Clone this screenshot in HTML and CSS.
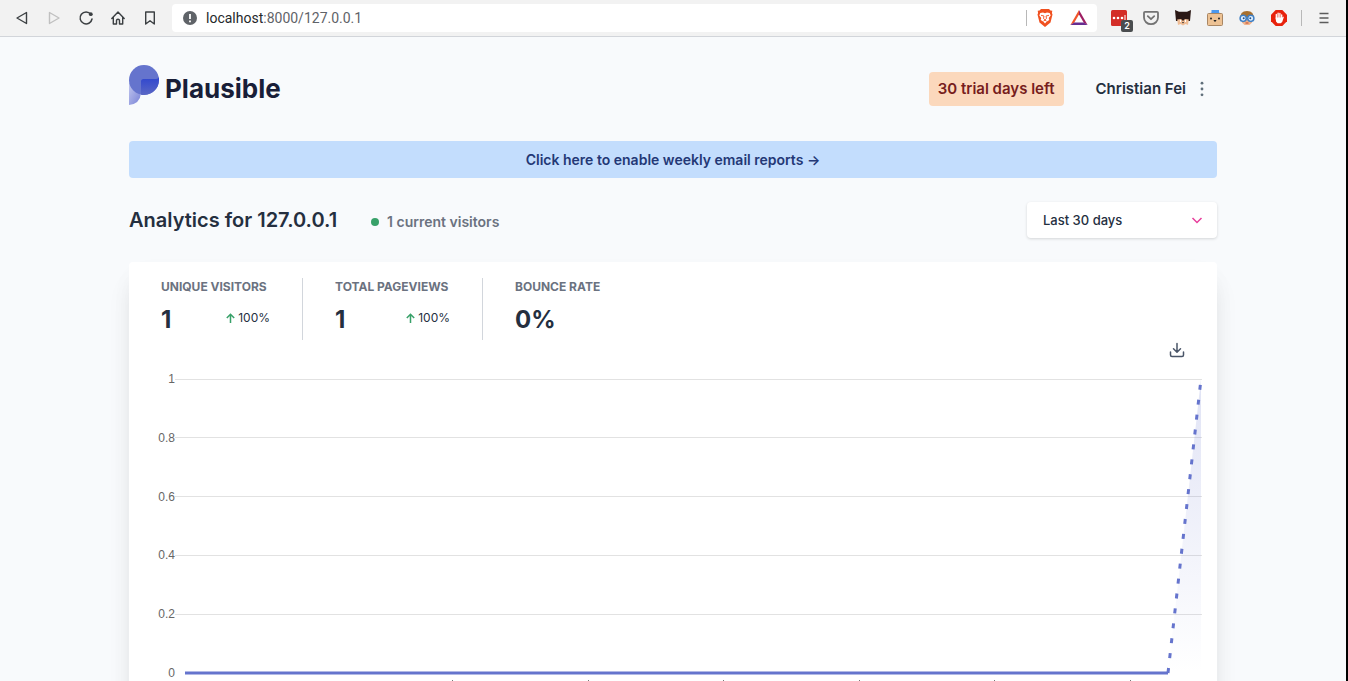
FILE: index.html
```html
<!DOCTYPE html>
<html lang="en">
<head>
<meta charset="utf-8">
<title>Plausible · 127.0.0.1</title>
<link rel="stylesheet" href="styles.css">
</head>
<body>
<div class="window">
  <header class="toolbar">
    <div class="nav-buttons">
      <button class="tool" aria-label="Back"><svg width="16" height="16" viewBox="0 0 16 16"><path d="M12.5 2.5v11L3 8z" fill="none" stroke="#3c4043" stroke-width="1.4" stroke-linejoin="round"/></svg></button>
      <button class="tool" aria-label="Forward" disabled><svg width="16" height="16" viewBox="0 0 16 16"><path d="M3.5 2.5v11L13 8z" fill="none" stroke="#c0c0c0" stroke-width="1.4" stroke-linejoin="round"/></svg></button>
      <button class="tool" aria-label="Reload"><svg width="16" height="16" viewBox="0 0 16 16"><path d="M12.8 4.2A6 6 0 1 0 14 9" fill="none" stroke="#3c4043" stroke-width="1.5" stroke-linecap="round"/><circle cx="12.8" cy="4.2" r="1.9" fill="#3c4043"/></svg></button>
      <button class="tool" aria-label="Home"><svg width="16" height="16" viewBox="0 0 16 16"><path d="M1.8 8.4 8 2l6.200 6.400M3.300 7.300V14h3.200v-3.500q0-1.300 1.500-1.300t1.500 1.300V14h3.200V7.300" fill="none" stroke="#3c4043" stroke-width="1.400" stroke-linecap="round" stroke-linejoin="round"/></svg></button>
      <button class="tool" aria-label="Bookmark"><svg width="16" height="16" viewBox="0 0 16 16"><path d="M3.700 2h8.600v12L8 10.800 3.700 14z" fill="none" stroke="#3c4043" stroke-width="1.400" stroke-linejoin="round"/></svg></button>
    </div>
    <div class="address">
      <svg width="14" height="14" viewBox="0 0 14 14"><circle cx="7" cy="7" r="7" fill="#5f6368"/><path d="M7 3v5M7 9.500v1.700" stroke="#fff" stroke-width="1.800"/></svg>
      <div class="url"><span class="host">localhost</span>:8000/127.0.0.1</div>
      <span class="rule"></span>
      <button class="tool" aria-label="Shields"><svg width="18" height="20" viewBox="0 0 18 20"><path d="M5 1h8l1.500 1.500 1.800.3-.4 2.200.6 1.500-2 8L9 19l-5.500-4.500-2-8L2.100 5l-.4-2.200 1.800-.3z" fill="#f0501f"/><path d="M4.300 5 7 4.500l2 .8 2-.8 2.700.5 1 2.500-2 2.500.6 2-2.800 1.700L9 15.500l-1.500-1.800L4.700 12l.6-2-2-2.500z" fill="#fff"/><path d="M5 7.300 8 8l-.5 2.500L9 11.800l1.500-1.300L10 8l3-.7M7.500 13 9 12.200l1.500.8" fill="none" stroke="#f0501f" stroke-width=".9"/></svg></button>
      <button class="tool" aria-label="Rewards"><svg width="18" height="18" viewBox="0 0 18 18"><path d="M9 1 .4 16l3.800-2.200L9 5.500z" fill="#f0552c"/><path d="M9 1l8.600 15-3.800-2.200L9 5.500z" fill="#9e1f63"/><path d="M.4 16h17.200l-3.800-2.500H4.200z" fill="#662d91"/></svg></button>
    </div>
    <div class="extensions">
      <button class="tool" aria-label="Passwords, 2"><svg width="16" height="16" viewBox="0 0 16 16"><rect width="16" height="16" rx="1.500" fill="#d32d27"/><circle cx="3" cy="8" r="1.300" fill="#fff"/><circle cx="7" cy="8" r="1.300" fill="#fff"/><circle cx="11" cy="8" r="1.300" fill="#fff"/><path d="M14 5v6" stroke="#fff"/></svg><span class="badge">2</span></button>
      <button class="tool" aria-label="Pocket"><svg width="16" height="16" viewBox="0 0 16 16"><path d="M2 1.800h12q1 0 1 1V7.500a7 6.700 0 0 1-14 0V2.800q0-1 1-1z" fill="none" stroke="#737373" stroke-width="1.800"/><path d="M4.800 6.200 8 9.200l3.200-3" fill="none" stroke="#737373" stroke-width="1.800" stroke-linecap="round" stroke-linejoin="round"/></svg></button>
      <button class="tool" aria-label="Cat extension"><svg width="16" height="16" viewBox="0 0 16 16"><path d="M0 0 4 1.700h8L16 0l-1 11H1z" fill="#2a1815"/><path d="M2.200 9.500 6 9l2 2 2-2 3.800.5L13 15l-2.500-1L8 15.500 5.500 14 3 15z" fill="#efbd96"/><path d="M5.500 10v2M10.500 10v2" stroke="#fff"/><path d="M7 12h2l-1 1.500z" fill="#222"/></svg></button>
      <button class="tool" aria-label="Box extension"><svg width="16" height="16" viewBox="0 0 16 16"><path d="M4.500 0h7.500v2.500L15 4H1l3.500-1.500z" fill="#4b98ee"/><rect x=".5" y="3.500" width="15" height="12" rx="1" fill="#edc294" stroke="#a98663"/><circle cx="4" cy="8.500" r="1" fill="#222"/><circle cx="12" cy="8.500" r="1" fill="#222"/><path d="M7 10.500h2l-1 1z" fill="#222" stroke="#222"/></svg></button>
      <button class="tool" aria-label="Glasses extension"><svg width="16" height="16" viewBox="0 0 16 16"><path d="M1.500 9Q.5 1 8 1t6.500 8z" fill="#a8702e"/><path d="M3 7h10v5.500L10.500 15h-5L3 12.500z" fill="#f2b48c"/><circle cx="4.200" cy="8.300" r="3.100" fill="#e2f1ff" stroke="#3f7fc4" stroke-width="1.500"/><circle cx="11.800" cy="8.300" r="3.100" fill="#e2f1ff" stroke="#3f7fc4" stroke-width="1.500"/><circle cx="4.700" cy="8.300" r="1" fill="#234f87"/><circle cx="11.300" cy="8.300" r="1" fill="#234f87"/><path d="M6.500 13h3" stroke="#b9482f"/></svg></button>
      <button class="tool" aria-label="Ad blocker"><svg width="16" height="16" viewBox="0 0 16 16"><path d="M4.700 0h6.600L16 4.700v6.600L11.300 16H4.700L0 11.300V4.700z" fill="#e8220c"/><path d="M5.300 9V4.500M7.100 8V3.200M8.900 8V3.500M10.700 9V5" stroke="#fff" stroke-width="1.300" stroke-linecap="round"/><path d="M4.700 7.500h6.600l1-1 .5.700-1.600 4.800-1.500 1.200H6.600L5 11.500z" fill="#fff"/></svg></button>
      <span class="rule"></span>
      <button class="tool" aria-label="Menu"><svg width="16" height="16" viewBox="0 0 16 16"><path d="M3.500 3.500h9M3.500 8h9M3.500 12.500h9" stroke="#5c5c5c" stroke-width="1.600"/></svg></button>
    </div>
  </header>

  <main class="container">
    <nav class="site-nav">
      <a class="brand" href="#">
        <svg width="30" height="40" viewBox="0 0 30 40">
          <defs>
            <linearGradient id="stem" x1="0" y1="0" x2="1" y2="1"><stop offset="0" stop-color="#c2c7ee"/><stop offset="1" stop-color="#7680d6"/></linearGradient>
            <linearGradient id="fold" x1="0" y1="0" x2="0" y2="1"><stop offset="0" stop-color="#2f46cf"/><stop offset="1" stop-color="#5a67c4"/></linearGradient>
          </defs>
          <path d="M0 18v22q11-1 12-12V18z" fill="url(#stem)"/>
          <circle cx="15" cy="15" r="15" fill="#6574cd"/>
          <path d="M12 29.700V16.500q0-2.500 2.500-2.500H27q2.500 0 3-2v3a15 15 0 0 1-18 14.700z" fill="url(#fold)"/>
        </svg>
        <span class="wordmark">Plausible</span>
      </a>
      <div class="account">
        <a class="trial" href="#">30 trial days left</a>
        <button class="user">Christian Fei
          <svg width="16" height="16" viewBox="0 0 16 16" fill="#606f7b"><circle cx="8" cy="2.200" r="1.400"/><circle cx="8" cy="8" r="1.400"/><circle cx="8" cy="13.800" r="1.400"/></svg>
        </button>
      </div>
    </nav>

    <a class="notice" href="#">Click here to enable weekly email reports →</a>

    <div class="heading">
      <h1 class="title">Analytics for 127.0.0.1</h1>
      <div class="live"><span class="dot"></span>1 current visitors</div>
      <button class="period">Last 30 days
        <svg width="12" height="12" viewBox="0 0 12 12"><path d="M1.500 4 6 8.500 10.500 4" fill="none" stroke="#e83e9c" stroke-width="1.500"/></svg>
      </button>
    </div>

    <section class="card">
      <div class="stats">
        <div class="stat">
          <div class="label">UNIQUE VISITORS</div>
          <div class="row"><b class="value">1</b><span class="change"><svg width="9" height="10" viewBox="0 0 9 10"><path d="M4.500 10V1.500M.8 5l3.700-3.700L8.200 5" fill="none" stroke="#38a169" stroke-width="1.500"/></svg>100%</span></div>
        </div>
        <div class="stat">
          <div class="label">TOTAL PAGEVIEWS</div>
          <div class="row"><b class="value">1</b><span class="change"><svg width="9" height="10" viewBox="0 0 9 10"><path d="M4.500 10V1.500M.8 5l3.700-3.700L8.200 5" fill="none" stroke="#38a169" stroke-width="1.500"/></svg>100%</span></div>
        </div>
        <div class="stat">
          <div class="label">BOUNCE RATE</div>
          <div class="row"><b class="value">0%</b></div>
        </div>
      </div>
      <div class="actions">
        <button class="tool" aria-label="Download"><svg width="16" height="16" viewBox="0 0 16 16" fill="none" stroke="#4a5568" stroke-width="1.500" stroke-linecap="round" stroke-linejoin="round"><path d="M8 1.500v8.500M4.500 6.800 8 10.200l3.500-3.400M1.500 10v3q0 1.500 1.500 1.500h10q1.500 0 1.500-1.500v-3"/></svg></button>
      </div>
      <svg class="chart" viewBox="0 0 1056 340" role="img" aria-label="Visitors over the last 30 days">
        <defs><linearGradient id="area" x1="0" y1="0" x2="0" y2="1"><stop offset="0" stop-color="#6574cd" stop-opacity=".2"/><stop offset="1" stop-color="#6574cd" stop-opacity="0"/></linearGradient></defs>
        <path class="grid" d="M30 19.500h1027M30 77.500h1027M30 136.500h1027M30 195.500h1027M30 254.500h1027"/>
        <g class="axis">
          <text x="30" y="23">1</text><text x="30" y="82">0.8</text><text x="30" y="141">0.6</text><text x="30" y="199">0.4</text><text x="30" y="258">0.2</text><text x="30" y="317">0</text>
        </g>
        <path d="M1023 313 1056 19V313z" fill="url(#area)"/>
        <path class="line" d="M40 313h983"/>
        <path class="line dashed" d="M1023 313 1056 19"/>
        <path class="ticks" d="M307 320.500h1M443 320.500h1M578 320.500h1M714 320.500h1M849 320.500h1M985 320.500h1"/>
      </svg>
    </section>
  </main>
</div>
</body>
</html>
```
FILE: styles.css
```css
* { box-sizing: border-box; }
body { margin: 0; background: #f8fafc; color: #252f3f; font-family: Inter, "Noto Sans", sans-serif; font-size: 16px; line-height: 24px; }
button { margin: 0; padding: 0; border: 0; background: none; color: inherit; font: inherit; cursor: pointer; }
a { color: inherit; text-decoration: none; }
svg { display: block; flex: none; }

.window { height: 100vh; overflow: hidden; border-right: 2px solid #000; }

.toolbar { display: flex; align-items: center; padding: 4px 14px 4px; height: 37px; background: #f2f2f2; border-bottom: 1px solid #d2d5da; }
.tool { position: relative; display: flex; }
.nav-buttons, .extensions { display: flex; align-items: center; gap: 16px; }
.address { flex: 1; display: flex; align-items: center; height: 28px; margin: 0 14px; padding: 0 9px 0 11px; background: #fff; border-radius: 4px; }
.url { flex: 1; padding-left: 9px; font-family: Roboto, sans-serif; font-size: 14px; color: #5f6368; }
.host { color: #26282b; }
.rule { width: 1px; height: 16px; background: #b8b8b8; }
.address .tool { margin-left: 9px; }
.address .tool + .tool { margin-left: 16px; }
.extensions .rule { margin: 0 -2px; }
.badge { position: absolute; left: 10px; top: 10px; width: 12px; height: 12px; border-radius: 2px; background: #4a4d4f; color: #fff; font-size: 9px; font-weight: 600; line-height: 12px; text-align: center; }

.container { max-width: 1120px; margin: 0 auto; padding: 0 16px; }
.site-nav { display: flex; align-items: center; justify-content: space-between; padding: 27px 0 35px; }
.brand { display: flex; align-items: center; gap: 6px; }
.wordmark { padding-top: 8px; color: #191e38; font-size: 26px; font-weight: 700; line-height: 32px; }
.account { display: flex; align-items: center; gap: 32px; padding-top: 8px; font-size: 15px; font-weight: 600; }
.trial { padding: 5px 9px; border-radius: 4px; background: #fbd8bc; color: #771d1d; }
.user { display: flex; align-items: center; gap: 8px; padding-right: 7px; }

.notice { display: block; padding: 8px; border-radius: 4px; background: #c3ddfd; color: #233876; font-size: 14px; font-weight: 600; line-height: 21px; text-align: center; }

.heading { display: flex; align-items: center; margin: 24px 0; }
.title { margin: 0; font-size: 20px; font-weight: 600; line-height: 36px; }
.live { display: flex; align-items: center; gap: 8px; margin-left: 34px; padding-top: 4px; color: #6b7280; font-size: 14px; font-weight: 600; line-height: 20px; }
.dot { width: 8px; height: 8px; border-radius: 50%; background: #38a169; }
.period { display: flex; align-items: center; justify-content: space-between; width: 190px; margin-left: auto; padding: 8px 14px 8px 16px; border-radius: 4px; background: #fff; box-shadow: 0 1px 3px rgba(0, 0, 0, .15); font-size: 13px; font-weight: 500; line-height: 20px; }

.card { padding: 16px 16px 32px; border-radius: 4px; background: #fff; box-shadow: 0 20px 25px -5px rgba(0, 0, 0, .1), 0 10px 24px -5px rgba(0, 0, 0, .05); }
.stats { display: grid; grid-template-columns: 141px 180px auto; padding-left: 16px; }
.stat { padding-right: 32px; }
.stat + .stat { padding-left: 32px; border-left: 1px solid #d2d6dc; }
.label { color: #6b7280; font-size: 12px; font-weight: 700; line-height: 18px; }
.row { display: flex; align-items: center; justify-content: space-between; padding-top: 4px; line-height: 40px; }
.value { font-size: 24px; font-weight: 700; }
.change { display: flex; align-items: center; gap: 3px; padding-bottom: 4px; font-size: 12px; line-height: 36px; }
.actions { display: flex; justify-content: flex-end; padding: 2px 16px; }
.chart { width: 100%; overflow: visible; }
.grid { fill: none; stroke: #e2e2e2; }
.axis { fill: #666; font-family: "Liberation Sans", Arial, sans-serif; font-size: 12px; text-anchor: end; }
.ticks { fill: none; stroke: #777; }
.line { fill: none; stroke: #6574cd; stroke-width: 3; stroke-linejoin: round; }
.dashed { stroke-dasharray: 5 10; }
```
